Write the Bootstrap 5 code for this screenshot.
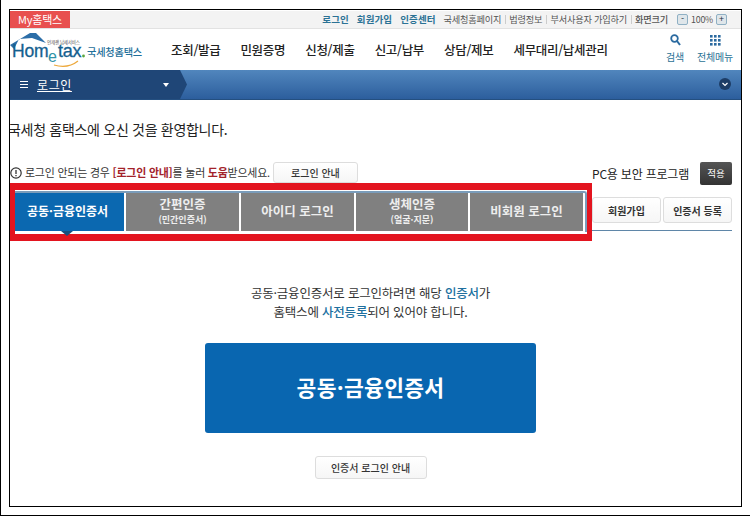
<!DOCTYPE html>
<html lang="ko">
<head>
  <meta charset="UTF-8" />
  <meta name="viewport" content="width=device-width, initial-scale=1.0"/>
  <title>국세청 홈택스 로그인</title>
  <link href="https://cdn.jsdelivr.net/npm/bootstrap@5.3.3/dist/css/bootstrap.min.css" rel="stylesheet">
  <style>
    body { margin: 0; background: #fff; font-family: "Noto Sans CJK KR", "Liberation Sans", sans-serif; color: #333; letter-spacing: -0.2px; }
    .ht-page { width: 750px; height: 516px; border-left: 1px solid #000; border-bottom: 1px solid #000; padding: 9px 0 0 8px; overflow: hidden; }
    .ht-frame { width: 733px; height: 498px; border: 1px solid #000; padding-top: 1px; overflow: hidden; }

    .ht-top { height: 18px; background: #f3f3f3; border-bottom: 1px solid #e2e2e2; font-size: 9.2px; color: #555; padding-right: 14px; line-height: 17px; white-space: nowrap; }
    .ht-my { width: 60px; background: #e8504f; color: #fff; font-size: 11px; text-align: center; }
    .ht-toplink { color: #2b7295; font-weight: 700; font-size: 9.5px; margin-right: 8px; letter-spacing: .1px; }
    .ht-topsep { border-left: 1px solid #ccc; height: 9px; margin: 0 3.5px; }
    .ht-zoom { width: 11px; height: 11px; border: 1px solid #8fb0c4; background: #dfe6ea; border-radius: 2px; font-size: 9px; line-height: 8px; text-align: center; color: #234; }
    .ht-zoomgap { margin-left: 9px; }
    .ht-zoompct { margin: 0 3px; font-size: 8.8px; }

    .ht-head { height: 41px; background: #fff; white-space: nowrap; }
    .ht-logo { flex: 0 0 161px; }
    .ht-menu { font-size: 12.5px; font-weight: 500; color: #222; gap: 20px; letter-spacing: -0.3px; padding-top: 2px; }
    .ht-tool { font-size: 10px; color: #2b7295; line-height: 13px; text-align: center; }
    .ht-tools { gap: 13px; padding: 0 8px 2px 0; }

    .ht-bar { height: 30px; background: linear-gradient(#5186bd, #2c5e9d); border-bottom: 1px solid #244f80; }
    .ht-crumb { width: 177px; height: 29px; background: #1f4677; color: #fff; font-size: 12px; padding-left: 10px; gap: 9px; white-space: nowrap; letter-spacing: .6px; clip-path: polygon(0 0, 170px 0, 177px 50%, 170px 100%, 0 100%); }
    .ht-burger { width: 8px; height: 7px; border-top: 1px solid #fff; border-bottom: 1px solid #fff; position: relative; }
    .ht-burger::after { content: ""; position: absolute; left: 0; right: 0; top: 2px; border-top: 1px solid #fff; }
    .ht-crumbtext { text-decoration: underline; text-underline-offset: 1px; }
    .ht-crumbcaret { border: 3px solid transparent; border-top: 4px solid #fff; border-bottom: 0; margin-left: 82px; }
    .ht-circle { width: 12px; height: 12px; margin-right: 10px; }

    .ht-main { padding-right: 10px; }
    .ht-title { font-size: 14px; font-weight: 400; color: #222; margin: 18px 0 22px -2px; line-height: 22px; letter-spacing: -0.3px; white-space: nowrap; }
    .ht-left { flex: 0 0 582px; }
    .ht-notice { height: 21px; font-size: 10.95px; white-space: nowrap; }
    .ht-notice b { color: #a3222a; font-weight: 700; }
    .ht-bang { flex: 0 0 12px; height: 12px; margin-right: 3px; }
    .ht-btn { background: linear-gradient(#fff, #f6f6f6); border: 1px solid #ddd; border-radius: 3px; color: #333; font-size: 10px; font-weight: 500; padding: 0; }
    .ht-guide { flex: 0 0 85px; height: 21px; margin-left: 3px; }

    .ht-redbox { height: 58px; border-style: solid; border-color: #e3141f; border-width: 7px 5px; background: #fff; padding-top: 1px; }
    .ht-tabs { border-top: 2px solid #7a9cba; border-right: 2px solid #7a9cba; border-radius: 0 3px 0 0; gap: 2px; height: 41px; flex-wrap: nowrap; }
    .ht-tab.nav-link { height: 38px; background: #808080; color: #eee; font-size: 12.5px; font-weight: 700; padding: 0 0 3px; line-height: 15px; text-align: center; display: flex; flex-direction: column; justify-content: center; letter-spacing: 0; white-space: nowrap; }
    .ht-tab small { font-size: 9px; line-height: 12px; margin-top: 3px; }
    .ht-tab.ht-on { background: #0b68b0; color: #fff; position: relative; font-size: 12px; padding-right: 4px; }
    .ht-tab.ht-on::after { content: ""; position: absolute; left: 46px; top: 38px; border: 6px solid transparent; border-top: 5px solid #17507f; border-bottom: 0; }

    .ht-right { flex: 0 0 140px; }
    .ht-pc { height: 23px; font-size: 12px; color: #222; gap: 11px; white-space: nowrap; }
    .ht-apply { width: 32px; height: 23px; background: linear-gradient(#555, #333); color: #fff; border: 0; border-radius: 2px; font-size: 9.5px; padding: 0; }
    .ht-side { gap: 2px; margin-top: 12px; }
    .ht-side .ht-btn { height: 26px; flex: 1 1 0; white-space: nowrap; font-weight: 700; }
    .ht-rule { border-top: 1px solid #5f86a8; margin-top: 7px; }

    .ht-copy { font-size: 12.5px; line-height: 19px; margin: 42px 0 22px; color: #333; }
    .ht-copy b { color: #20709f; font-weight: 500; }
    .ht-big { display: block; width: 331px; height: 90px; margin: 0 auto 23px; background: #0966b0; border: 0; border-radius: 3px; color: #fff; font-size: 21.5px; font-weight: 700; letter-spacing: 0.3px; padding-bottom: 8px; }
    .ht-big:hover { background: #0966b0; color: #fff; }
    .ht-certguide { width: 112px; height: 23px; }
  </style>
</head>
<body>
  <div class="ht-page">
    <div class="ht-frame">

      <div class="ht-top d-flex align-items-center">
        <div class="ht-my">My홈택스</div>
        <div class="ms-auto d-flex align-items-center">
          <span class="ht-toplink">로그인</span>
          <span class="ht-toplink">회원가입</span>
          <span class="ht-toplink">인증센터</span>
          <span>국세청홈페이지</span><i class="ht-topsep"></i>
          <span>법령정보</span><i class="ht-topsep"></i>
          <span>부서사용자 가입하기</span><i class="ht-topsep"></i>
          <span class="fw-medium">화면크기</span>
          <span class="ht-zoom ht-zoomgap">-</span>
          <span class="ht-zoompct">100%</span>
          <span class="ht-zoom">+</span>
        </div>
      </div>

      <div class="ht-head d-flex align-items-center">
        <svg class="ht-logo" width="161" height="41" viewBox="0 0 161 41" role="img" aria-label="Hometax">
          <path d="M0 16 L20 4 L26 4 L36 14 L22 9 L9 10 L4 20 Z" fill="#2c6ea8"/>
          <text x="37" y="14.5" font-size="4.5" fill="#555" font-family="Noto Sans CJK KR">언제랜 납세서비스</text>
          <text x="2" y="28" font-size="17.5" fill="#15608f" font-family="Liberation Sans" stroke="#15608f" stroke-width=".3">Hom</text>
          <text x="38" y="33" font-size="16" fill="#2f93a8" font-family="Liberation Sans">e</text>
          <text x="48" y="28" font-size="18" fill="#15608f" font-family="Liberation Sans" stroke="#15608f" stroke-width=".3">tax</text>
          <circle cx="73.5" cy="27" r="1.4" fill="#5aa63c"/>
          <path d="M44 36 Q58 40 68 32" fill="none" stroke="#eda83a" stroke-width="1.2"/>
          <text x="77" y="27" font-size="10.2" fill="#1f6f9a" font-family="Noto Sans CJK KR" font-weight="500">국세청홈택스</text>
        </svg>
        <div class="ht-menu d-flex">
          <span>조회/발급</span>
          <span>민원증명</span>
          <span>신청/제출</span>
          <span>신고/납부</span>
          <span>상담/제보</span>
          <span>세무대리/납세관리</span>
        </div>
        <div class="ht-tools d-flex ms-auto">
          <div class="ht-tool">
            <svg class="d-block mx-auto mb-1" width="11" height="12" viewBox="0 0 11 12"><circle cx="4.5" cy="4.5" r="3.3" fill="none" stroke="#2b6aa0" stroke-width="1.8"/><path d="M7 7 L10 11" stroke="#2b6aa0" stroke-width="2"/></svg>검색
          </div>
          <div class="ht-tool">
            <svg class="d-block mx-auto mb-1" width="11" height="12" viewBox="0 0 11 12" fill="#2b6aa0"><rect x="0" y="1" width="2.6" height="2.6"/><rect x="4" y="1" width="2.6" height="2.6"/><rect x="8" y="1" width="2.6" height="2.6"/><rect x="0" y="5" width="2.6" height="2.6"/><rect x="4" y="5" width="2.6" height="2.6"/><rect x="8" y="5" width="2.6" height="2.6"/><rect x="0" y="9" width="2.6" height="2.6"/><rect x="4" y="9" width="2.6" height="2.6"/><rect x="8" y="9" width="2.6" height="2.6"/></svg>전체메뉴
          </div>
        </div>
      </div>

      <div class="ht-bar d-flex align-items-start justify-content-between">
        <div class="ht-crumb d-flex align-items-center">
          <i class="ht-burger"></i>
          <span class="ht-crumbtext">로그인</span>
          <i class="ht-crumbcaret"></i>
        </div>
        <svg class="ht-circle mt-2" viewBox="0 0 12 12"><circle cx="6" cy="6" r="6" fill="#1d3d66"/><path d="M3.5 5 L6 7.5 L8.5 5" fill="none" stroke="#fff" stroke-width="1.2"/></svg>
      </div>

      <div class="ht-main">
        <h1 class="ht-title">국세청 홈택스에 오신 것을 환영합니다.</h1>

        <div class="d-flex">
          <div class="ht-left">
            <div class="ht-notice d-flex align-items-center">
              <svg class="ht-bang" viewBox="0 0 12 12"><circle cx="6" cy="6" r="5.2" fill="none" stroke="#333" stroke-width="1.2"/><path d="M6 3 V7 M6 8 V9.3" stroke="#333" stroke-width="1.3"/></svg>
              <span>로그인 안되는 경우 <b>[로그인 안내]</b>를 눌러 <b>도움</b>받으세요.</span>
              <button class="btn ht-btn ht-guide">로그인 안내</button>
            </div>
            <div class="ht-redbox">
              <ul class="ht-tabs nav list-unstyled mb-0">
                <li><a class="ht-tab ht-on nav-link" style="width:109px" href="#">공동·금융인증서</a></li>
                <li><a class="ht-tab nav-link" style="width:113px" href="#"><span>간편인증</span><small>(민간인증서)</small></a></li>
                <li><a class="ht-tab nav-link" style="width:113px" href="#">아이디 로그인</a></li>
                <li><a class="ht-tab nav-link" style="width:112px" href="#"><span>생체인증</span><small>(얼굴·지문)</small></a></li>
                <li><a class="ht-tab nav-link" style="width:113px" href="#">비회원 로그인</a></li>
              </ul>
            </div>
          </div>
          <div class="ht-right">
            <div class="ht-pc d-flex align-items-center justify-content-end">
              <span>PC용 보안 프로그램</span>
              <button class="btn ht-apply">적용</button>
            </div>
            <div class="ht-side d-flex">
              <button class="btn ht-btn">회원가입</button>
              <button class="btn ht-btn">인증서 등록</button>
            </div>
            <div class="ht-rule"></div>
          </div>
        </div>

        <p class="ht-copy text-center">공동·금융인증서로 로그인하려면 해당 <b>인증서</b>가<br>홈택스에 <b>사전등록</b>되어 있어야 합니다.</p>
        <button class="btn ht-big">공동·금융인증서</button>
        <div class="d-flex justify-content-center"><button class="btn ht-btn ht-certguide">인증서 로그인 안내</button></div>
      </div>

    </div>
  </div>
  <script src="https://cdn.jsdelivr.net/npm/bootstrap@5.3.3/dist/js/bootstrap.bundle.min.js"></script>
</body>
</html>
